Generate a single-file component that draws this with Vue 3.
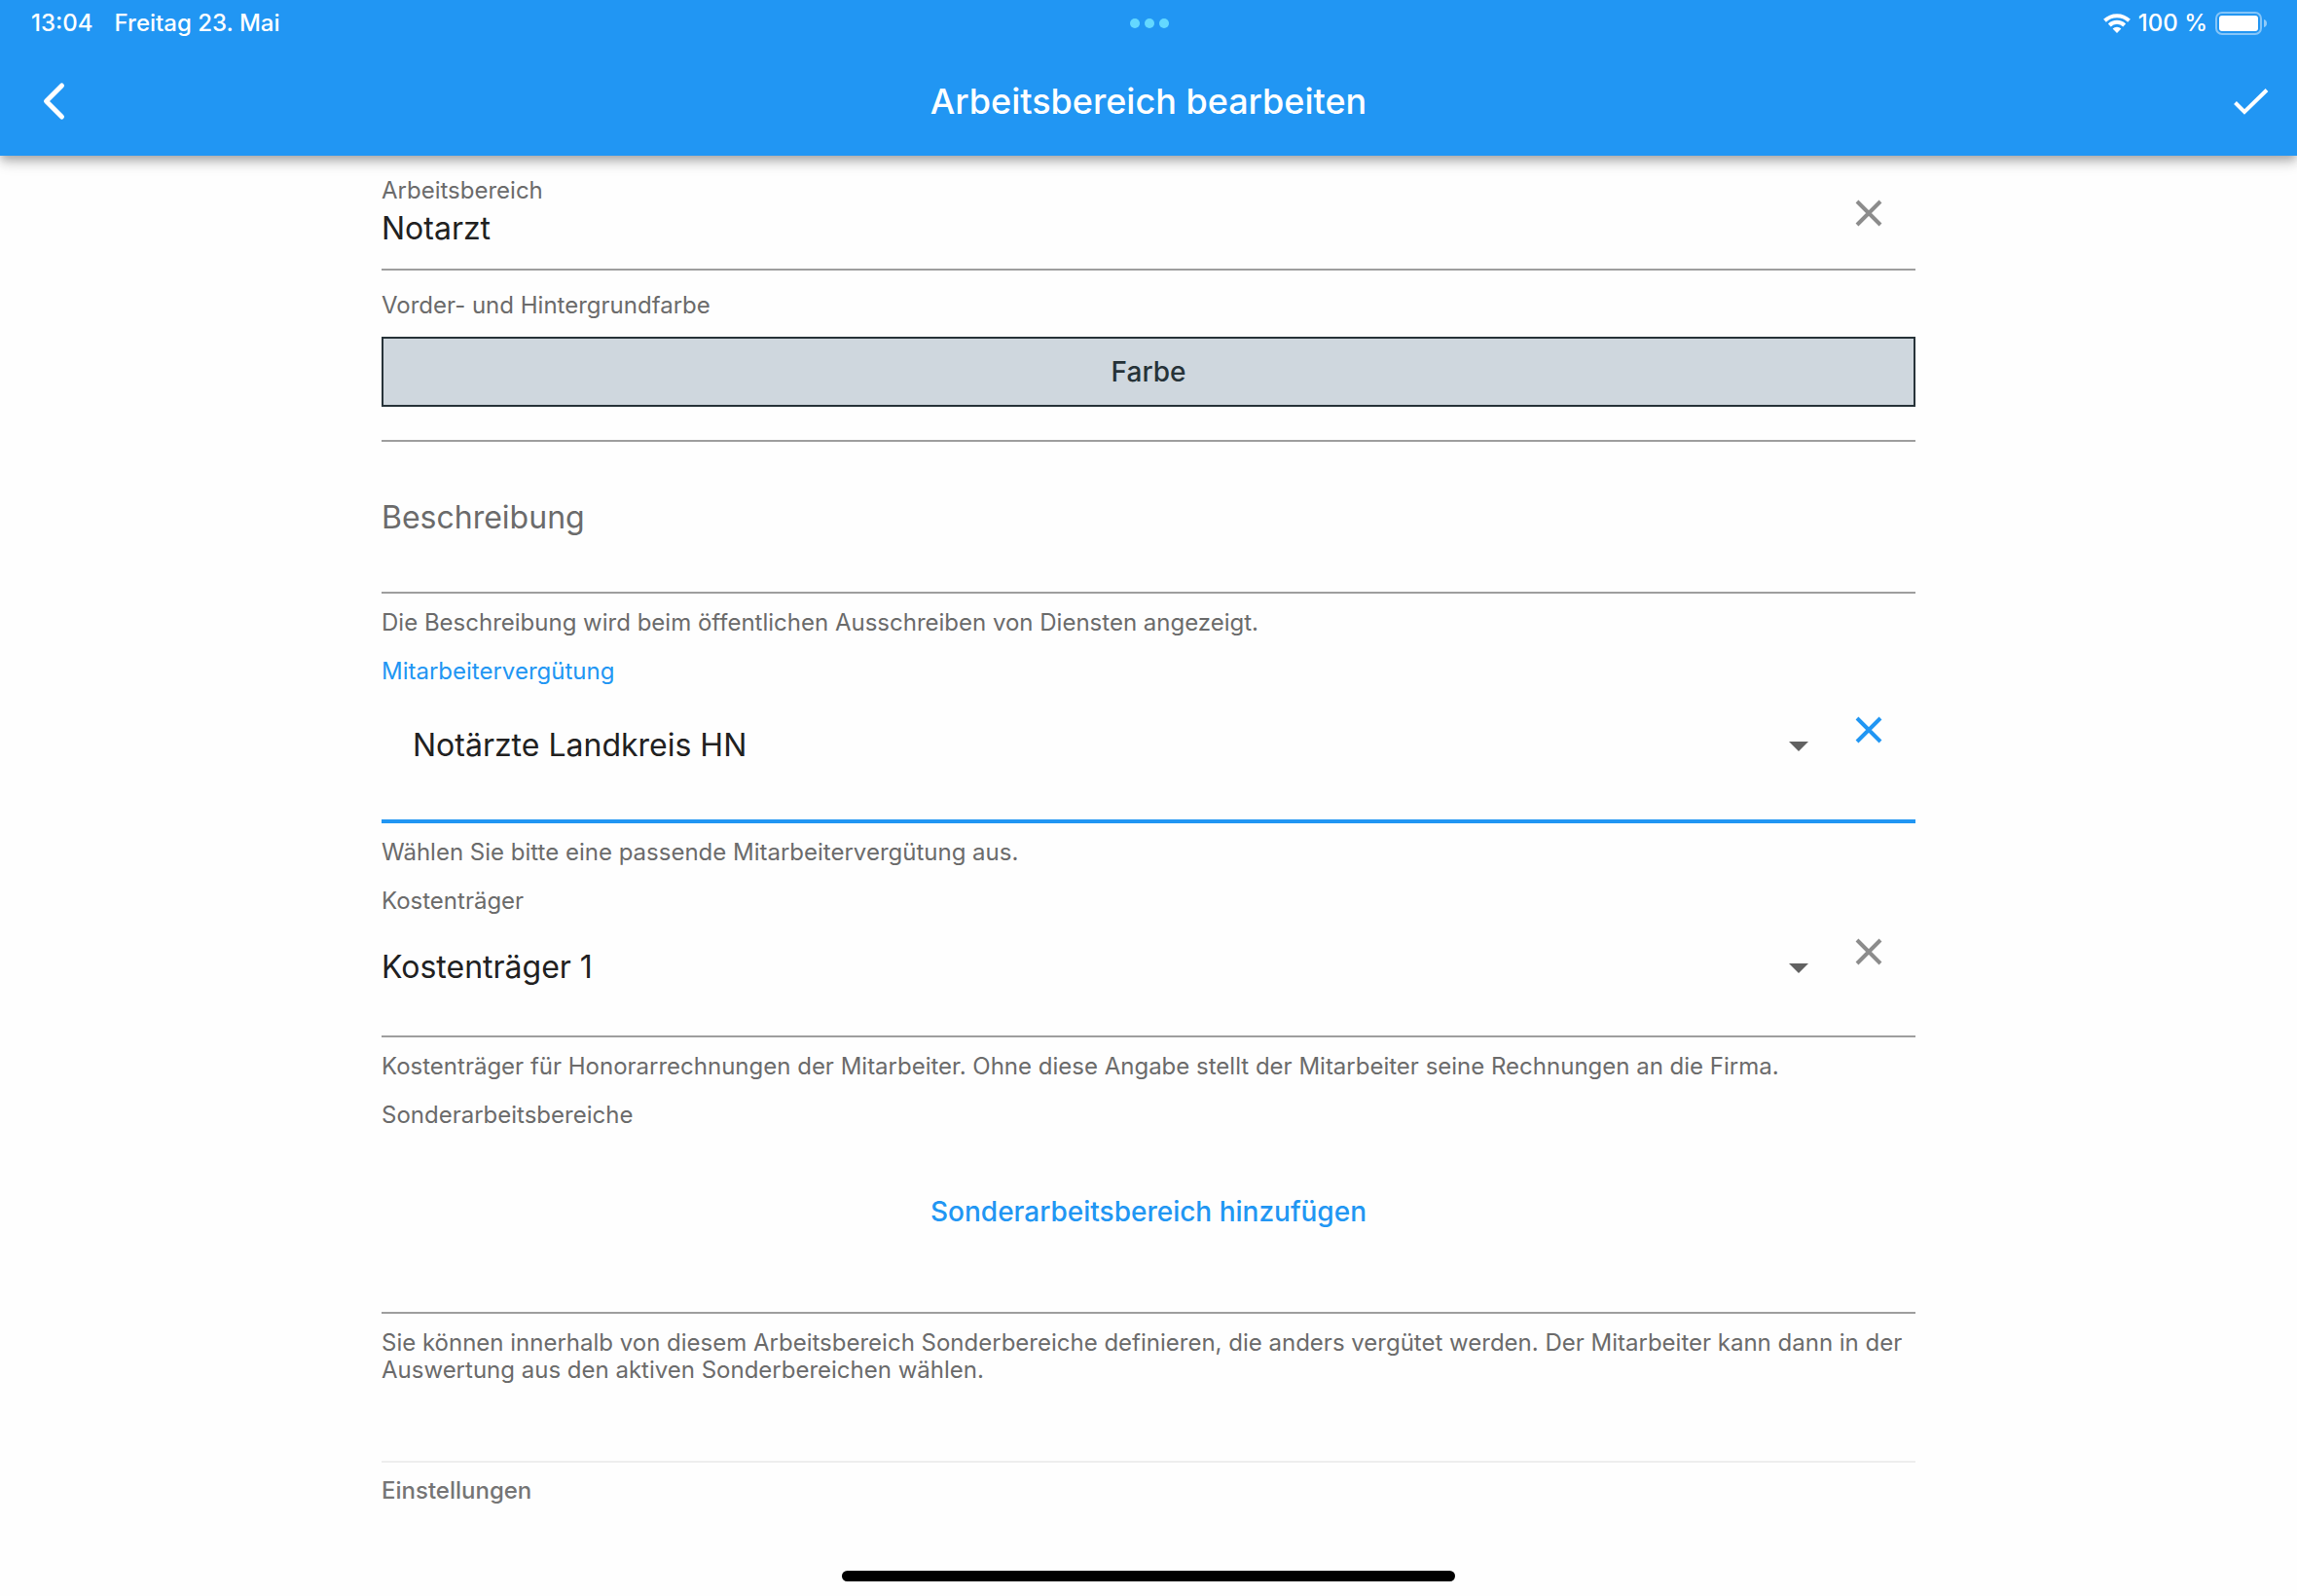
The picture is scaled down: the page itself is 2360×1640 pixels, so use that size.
<script setup>
import { ref } from 'vue'

const name = ref('Notarzt')
const description = ref('')
const compensation = ref('Notärzte Landkreis HN')
const payer = ref('Kostenträger 1')
</script>

<template>
  <div class="page">
    <header class="header">
      <div class="status">
        <div class="status-side">
          <span>13:04</span>
          <span>Freitag 23. Mai</span>
        </div>
        <div class="dots"><i></i><i></i><i></i></div>
        <div class="status-side status-end">
          <svg width="28" height="20" viewBox="0 0 28 20" fill="none" stroke="#fff" stroke-width="4">
            <path d="M1.500 7.300A18 18 0 0 1 26.500 7.300" />
            <path d="M6.300 12A11 11 0 0 1 21.700 12" />
            <path d="M14 20L9.600 15.600A6.200 6.200 0 0 1 18.400 15.600Z" fill="#fff" stroke="none" />
          </svg>
          <span class="percent">100 %</span>
          <svg width="54" height="24" viewBox="0 0 54 24">
            <rect x="1" y="1" width="46" height="22" rx="6" fill="none" stroke="#fff" stroke-opacity=".45" stroke-width="2" />
            <rect x="4" y="4" width="40" height="16" rx="3" fill="#fff" />
            <path d="M50 8C52 8.600 53 10 53 12S52 15.400 50 16Z" fill="#fff" fill-opacity=".5" />
          </svg>
        </div>
      </div>
      <div class="toolbar">
        <button class="icon-button" type="button" aria-label="Zurück">
          <svg width="48" height="48" viewBox="0 0 48 48" fill="none" stroke="#fff" stroke-width="5" stroke-linecap="round" stroke-linejoin="round">
            <path d="M39.500 8L23.500 24L39.500 40" />
          </svg>
        </button>
        <h1>Arbeitsbereich bearbeiten</h1>
        <button class="icon-button" type="button" aria-label="Speichern">
          <svg width="48" height="48" viewBox="0 0 48 48" fill="none" stroke="#fff" stroke-width="4">
            <path d="M8.500 25.500L18 35L41 12.500" />
          </svg>
        </button>
      </div>
    </header>

    <main class="form">
      <div class="field field-name">
        <div class="stack">
          <label class="label" for="name">Arbeitsbereich</label>
          <input id="name" v-model="name" class="value" type="text" />
        </div>
        <button class="clear" type="button" aria-label="Arbeitsbereich leeren" @click="name = ''">
          <svg width="48" height="48" viewBox="0 0 48 48"><path d="M12 12L36 36M36 12L12 36" /></svg>
        </button>
      </div>

      <div class="field field-color">
        <span id="color-label" class="label">Vorder- und Hintergrundfarbe</span>
        <button class="color" type="button" aria-describedby="color-label">Farbe</button>
      </div>

      <div class="field">
        <input v-model="description" class="value description" type="text" placeholder="Beschreibung" aria-label="Beschreibung" aria-describedby="description-help" />
      </div>
      <p id="description-help" class="help">Die Beschreibung wird beim öffentlichen Ausschreiben von Diensten angezeigt.</p>

      <label class="label active-label" for="compensation">Mitarbeitervergütung</label>
      <div class="field picker picker-active">
        <div class="select">
          <select id="compensation" v-model="compensation" class="value">
            <option>Notärzte Landkreis HN</option>
          </select>
          <svg class="arrow" width="48" height="48" viewBox="0 0 24 24"><path d="M7 10l5 5 5-5z" /></svg>
        </div>
        <button class="clear" type="button" aria-label="Mitarbeitervergütung leeren" @click="compensation = ''">
          <svg width="48" height="48" viewBox="0 0 48 48"><path d="M12 12L36 36M36 12L12 36" /></svg>
        </button>
      </div>
      <p class="help">Wählen Sie bitte eine passende Mitarbeitervergütung aus.</p>

      <label class="label" for="payer">Kostenträger</label>
      <div class="field picker">
        <div class="select">
          <select id="payer" v-model="payer" class="value">
            <option>Kostenträger 1</option>
          </select>
          <svg class="arrow" width="48" height="48" viewBox="0 0 24 24"><path d="M7 10l5 5 5-5z" /></svg>
        </div>
        <button class="clear" type="button" aria-label="Kostenträger leeren" @click="payer = ''">
          <svg width="48" height="48" viewBox="0 0 48 48"><path d="M12 12L36 36M36 12L12 36" /></svg>
        </button>
      </div>
      <p class="help">Kostenträger für Honorarrechnungen der Mitarbeiter. Ohne diese Angabe stellt der Mitarbeiter seine Rechnungen an die Firma.</p>

      <span class="label">Sonderarbeitsbereiche</span>
      <div class="field field-add">
        <button class="add" type="button">Sonderarbeitsbereich hinzufügen</button>
      </div>
      <p class="help">Sie können innerhalb von diesem Arbeitsbereich Sonderbereiche definieren, die anders vergütet werden. Der Mitarbeiter kann dann in der Auswertung aus den aktiven Sonderbereichen wählen.</p>

      <h2 class="section">Einstellungen</h2>
    </main>

    <div class="home-bar"></div>
  </div>
</template>

<style>
body {
  background: #fefefe;
}
</style>

<style scoped>
.page {
  min-height: 100vh;
  position: relative;
  box-sizing: border-box;
  padding-bottom: 48px;
  font-family: Inter, "Liberation Sans", sans-serif;
  font-size: 24px;
  line-height: 28px;
  color: #212121;
}
button,
input,
select {
  box-sizing: border-box;
  margin: 0;
  padding: 0;
  border: 0;
  border-radius: 0;
  background: none;
  color: inherit;
  font: inherit;
  outline: none;
}
button {
  cursor: pointer;
}
svg {
  display: block;
}
.header {
  position: relative;
  background: #2196f3;
  color: #fff;
  box-shadow: 0 4px 8px -2px rgba(0, 0, 0, 0.2), 0 8px 10px rgba(0, 0, 0, 0.14), 0 2px 20px rgba(0, 0, 0, 0.12);
}
.status {
  display: flex;
  align-items: center;
  height: 48px;
  padding: 0 30px 0 32px;
  font-weight: 500;
}
.status-side {
  flex: 1;
  display: flex;
  align-items: center;
  gap: 22px;
}
.status-end {
  justify-content: flex-end;
  gap: 8px;
}
.dots {
  display: flex;
  gap: 5px;
}
.dots i {
  width: 10px;
  height: 10px;
  border-radius: 50%;
  background: #64d8ff;
}
.toolbar {
  display: flex;
  align-items: center;
  justify-content: space-between;
  height: 112px;
  padding: 0 24px;
}
.icon-button {
  width: 48px;
  height: 48px;
}
h1 {
  margin: 0;
  font-size: 36px;
  line-height: 48px;
  font-weight: 500;
}
.form {
  box-sizing: border-box;
  max-width: 1640px;
  margin: 0 auto;
  padding: 11px 32px 0;
}
.label {
  display: block;
  color: #6b6b6b;
}
.active-label {
  color: #2196f3;
}
.field {
  display: flex;
  border-bottom: 2px solid #9e9e9e;
}
.value {
  display: block;
  width: 100%;
  font-size: 32px;
  line-height: 40px;
}
.field-name {
  padding-bottom: 9px;
}
.stack {
  flex: 1;
  display: flex;
  flex-direction: column;
  gap: 5px;
  padding-top: 11px;
}
.clear {
  width: 96px;
  height: 96px;
  display: flex;
  align-items: center;
  justify-content: center;
}
.clear path {
  fill: none;
  stroke: #8c8c8c;
  stroke-width: 4;
}
.field-color {
  flex-direction: column;
  gap: 18px;
  padding: 22px 0 34px;
}
.color {
  height: 72px;
  border: 2px solid #263238;
  background: #cfd7de;
  color: #263238;
  font-size: 28px;
  line-height: 32px;
  font-weight: 500;
}
.description {
  height: 154px;
}
.description::placeholder {
  color: #6b6b6b;
  opacity: 1;
}
.help {
  margin: 16px 0 22px;
  color: #6b6b6b;
}
.picker {
  padding-bottom: 16px;
}
.select {
  position: relative;
  flex: 1;
}
.select .value {
  height: 108px;
  appearance: none;
}
.arrow {
  position: absolute;
  right: 0;
  top: 50%;
  margin-top: -24px;
  fill: #616161;
  pointer-events: none;
}
.picker .clear {
  height: auto;
  padding-bottom: 32px;
}
.picker-active {
  padding-bottom: 14px;
  border-bottom: 4px solid #2196f3;
}
.picker-active .value {
  height: 124px;
  padding-left: 32px;
}
.picker-active .clear path {
  stroke: #2196f3;
}
.field-add {
  justify-content: center;
  padding: 37px 0 55px;
}
.add {
  height: 96px;
  padding: 0 32px;
  color: #2196f3;
  font-size: 28px;
  line-height: 32px;
  font-weight: 500;
}
.section {
  margin: 79px 0 0;
  padding-top: 15px;
  border-top: 2px solid #eeeeee;
  color: #757575;
  font-size: 24px;
  line-height: 28px;
  font-weight: 500;
}
.home-bar {
  position: absolute;
  left: 50%;
  bottom: 15px;
  width: 630px;
  height: 11px;
  margin-left: -315px;
  border-radius: 6px;
  background: #000;
}
</style>
